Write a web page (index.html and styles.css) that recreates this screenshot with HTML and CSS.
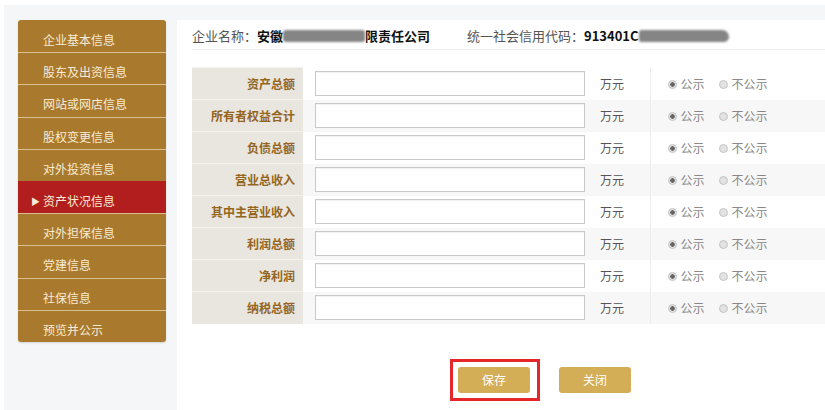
FILE: index.html
```html
<!DOCTYPE html>
<html>
<head>
  <meta charset="utf-8">
  <title>资产状况信息</title>
  <link rel="stylesheet" href="styles.css">
</head>
<body>
  <div class="page">
    <ul class="side-menu">
      <li>企业基本信息</li>
      <li>股东及出资信息</li>
      <li>网站或网店信息</li>
      <li>股权变更信息</li>
      <li>对外投资信息</li>
      <li class="active">资产状况信息</li>
      <li>对外担保信息</li>
      <li>党建信息</li>
      <li>社保信息</li>
      <li>预览并公示</li>
    </ul>

    <div class="main">
      <div class="company-bar">
        <span class="field">企业名称：<b>安徽<i class="masked mask-name"></i>限责任公司</b></span>
        <span class="field">统一社会信用代码：<b>913401C<i class="masked mask-code"></i></b></span>
      </div>

      <table class="asset-table">
        <tr>
          <th>资产总额</th>
          <td class="input-cell"><input type="text"></td>
          <td class="unit">万元</td>
          <td class="radios"><span class="radio on">公示</span><span class="radio">不公示</span></td>
        </tr>
        <tr>
          <th>所有者权益合计</th>
          <td class="input-cell"><input type="text"></td>
          <td class="unit">万元</td>
          <td class="radios"><span class="radio on">公示</span><span class="radio">不公示</span></td>
        </tr>
        <tr>
          <th>负债总额</th>
          <td class="input-cell"><input type="text"></td>
          <td class="unit">万元</td>
          <td class="radios"><span class="radio on">公示</span><span class="radio">不公示</span></td>
        </tr>
        <tr>
          <th>营业总收入</th>
          <td class="input-cell"><input type="text"></td>
          <td class="unit">万元</td>
          <td class="radios"><span class="radio on">公示</span><span class="radio">不公示</span></td>
        </tr>
        <tr>
          <th>其中主营业收入</th>
          <td class="input-cell"><input type="text"></td>
          <td class="unit">万元</td>
          <td class="radios"><span class="radio on">公示</span><span class="radio">不公示</span></td>
        </tr>
        <tr>
          <th>利润总额</th>
          <td class="input-cell"><input type="text"></td>
          <td class="unit">万元</td>
          <td class="radios"><span class="radio on">公示</span><span class="radio">不公示</span></td>
        </tr>
        <tr>
          <th>净利润</th>
          <td class="input-cell"><input type="text"></td>
          <td class="unit">万元</td>
          <td class="radios"><span class="radio on">公示</span><span class="radio">不公示</span></td>
        </tr>
        <tr>
          <th>纳税总额</th>
          <td class="input-cell"><input type="text"></td>
          <td class="unit">万元</td>
          <td class="radios"><span class="radio on">公示</span><span class="radio">不公示</span></td>
        </tr>
      </table>

      <div class="actions">
        <span class="highlight"><button class="btn">保存</button></span>
        <button class="btn">关闭</button>
      </div>
    </div>
  </div>
</body>
</html>
```

FILE: styles.css
```css
* {box-sizing: border-box}
body {
  margin: 0;
  background: #fff;
  font-family: "Noto Sans CJK SC", "Noto Sans", sans-serif;
  font-size: 12px;
}
.page {
  display: flex;
  margin: 5px 0 0 4px;
  padding-top: 15px;
  height: 405px;
  background: #f5f6f7;
}

/* left menu */
.side-menu {
  list-style: none;
  margin: 0 11px 0 14px;
  padding: 0;
  width: 148px;
  align-self: flex-start;
  box-shadow: 0 1px 2px rgba(0,0,0,0.15);
  border-radius: 3px;
  overflow: hidden;
}
.side-menu li {
  height: 32.2px;
  line-height: 27px;
  padding-top: 5px;
  padding-left: 25px;
  background: #a9792d;
  color: #f7ecd4;
  border-top: 1px solid #d8bf8c;
}
.side-menu li:first-child {border-top: none; padding-top: 6px}
.side-menu li.active {
  background: #b21d1e;
  padding-left: 13px;
  border-top-color: #b21d1e;
}
.side-menu li.active::before {
  content: "\25B6";
  font-size: 9px;
  margin-right: 3px;
  vertical-align: 1px;
}

/* main panel */
.main {
  flex: 1;
  background: #fff;
  padding-left: 15px;
}
.company-bar {
  height: 30px;
  line-height: 32px;
  border-bottom: 1px solid #f0f0f0;
  color: #555;
  font-size: 13px;
}
.company-bar .field {margin-right: 34px}
.company-bar b {color: #111}
.masked {
  display: inline-block;
  height: 12px;
  background: #858585;
  border-radius: 3px;
  filter: blur(1.2px);
  vertical-align: -1px;
}
.mask-name {width: 82px}
.mask-code {width: 90px; border-radius: 3px 8px 6px 3px}

.asset-table {
  margin-top: 17px;
  width: 100%;
  border-collapse: collapse;
}
.asset-table tr {height: 32px}
.asset-table tr:nth-child(even) td {background: #f7f7f7}
.asset-table th {
  width: 111px;
  padding-right: 8px;
  text-align: right;
  background: #e9e5df;
  color: #94651c;
  font-size: 12px;
  border-top: 1px solid #f5f2ee;
}
.asset-table td {padding: 0}
.input-cell {width: 293px; padding-left: 12px !important}
.input-cell input {
  width: 270px;
  height: 25px;
  border: 1px solid #c9c9c9;
  box-shadow: inset 0 1px 1px rgba(0,0,0,0.06);
}
.unit {
  width: 54px;
  padding-left: 4px !important;
  color: #555;
  border-right: 1px solid #eeeeee;
}
.radios {
  padding-left: 17px !important;
  color: #888;
}
.radio {
  display: inline-block;
  margin-right: 14px;
}
.radio::before {
  content: "";
  display: inline-block;
  width: 7px;
  height: 7px;
  margin-right: 4px;
  border: 1px solid #c4c4c4;
  border-radius: 50%;
  background: #e2e2e2;
  vertical-align: 0;
}
.radio.on::before {
  background: radial-gradient(circle, #666 0 2px, #e2e2e2 2.5px);
}

/* buttons */
.actions {
  display: flex;
  align-items: center;
  margin-top: 35px;
  padding-left: 258px;
}
.highlight {
  border: 3px solid #e5262b;
  padding: 5px 7px 5px 5px;
}
.btn {
  display: block;
  width: 72px;
  height: 26px;
  border: none;
  border-radius: 3px;
  background: #d4ad57;
  color: #fff;
  font-family: inherit;
  font-size: 12px;
}
.highlight + .btn {margin-left: 19px}
```
